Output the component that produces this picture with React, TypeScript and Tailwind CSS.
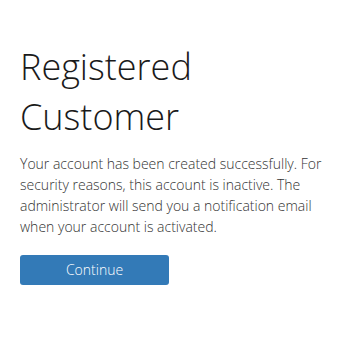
export default function App() {
  return (
    <div className="w-[360px] h-[341px] bg-white px-5 pt-[42px]" style={{ fontFamily: '"Open Sans", sans-serif' }}>
      <h1 className="text-[36px] leading-[50px] font-light text-[#1a1a1a]">Registered Customer</h1>
      <p className="mt-[11px] text-[14px] leading-[21px] font-light text-[#333]">
        Your account has been created successfully. For security reasons, this account is inactive. The administrator will send you a notification email when your account is activated.
      </p>
      <button className="mt-[18px] w-[149px] h-[30px] rounded-[3px] bg-[#337ab7] text-white text-[14px] leading-[20px] font-light">
        Continue
      </button>
    </div>
  );
}
